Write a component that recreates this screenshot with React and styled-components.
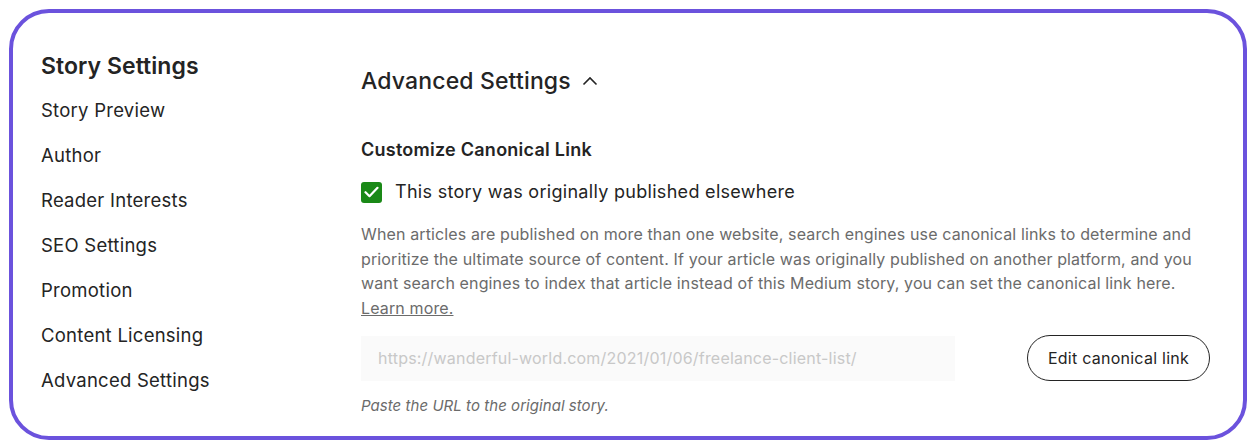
import React from "react";
import styled, { createGlobalStyle } from "styled-components";

const Global = createGlobalStyle`
  html, body { margin: 0; padding: 0; background: #ffffff; }
  body { font-family: Inter, "Noto Sans", sans-serif; color: #242424; }
`;

const Frame = styled.div`
  box-sizing: border-box;
  margin: 9px;
  width: 1238px;
  height: 431px;
  border: 4px solid #6b52dd;
  border-radius: 40px;
  background: #fff;
  display: flex;
  padding: 37px 0 0 28px;
  overflow: hidden;
`;

const Sidebar = styled.nav`
  width: 320px;
  flex: none;
  display: flex;
  flex-direction: column;
`;

const SideTitle = styled.h2`
  margin: 0 0 16px;
  font-size: 23px;
  line-height: 32px;
  font-weight: 600;
  color: #242424;
  letter-spacing: 0.05px;
`;

const SideItem = styled.a`
  font-size: 18.5px;
  line-height: 24px;
  height: 45px;
  color: #242424;
  text-decoration: none;
  letter-spacing: 0.25px;
`;

const Main = styled.section`
  width: 849px;
  display: flex;
  flex-direction: column;
  padding-top: 15px;
`;

const SectionTitle = styled.h2`
  margin: 0;
  display: flex;
  align-items: center;
  gap: 11px;
  font-size: 23px;
  line-height: 32px;
  font-weight: 500;
  color: #242424;
  letter-spacing: 0.15px;
`;

const SubTitle = styled.h3`
  margin: 41px 0 0;
  font-size: 18px;
  line-height: 24px;
  font-weight: 600;
  color: #242424;
  letter-spacing: 0.25px;
`;

const CheckRow = styled.label`
  margin-top: 18px;
  display: flex;
  align-items: center;
  gap: 13px;
  font-size: 18px;
  line-height: 24px;
  color: #242424;
  letter-spacing: 0.3px;
`;

const Box = styled.span`
  width: 21px;
  height: 21px;
  border-radius: 3px;
  background: #1a8917;
  display: inline-flex;
  align-items: center;
  justify-content: center;
  flex: none;
`;

const Para = styled.p`
  margin: 18px 0 0;
  font-size: 16px;
  line-height: 24.6px;
  color: #6b6b6b;
  letter-spacing: 0.13px;
`;

const Learn = styled.a`
  color: #6b6b6b;
  text-decoration: underline;
`;

const InputRow = styled.div`
  margin-top: 15px;
  display: flex;
  align-items: center;
  justify-content: space-between;
`;

const UrlInput = styled.input`
  box-sizing: border-box;
  width: 594px;
  height: 45px;
  border: none;
  outline: none;
  background: #fafafa;
  padding: 0 17px;
  font-family: inherit;
  font-size: 16px;
  letter-spacing: 0.2px;
  color: #242424;
  &::placeholder { color: #c8c8c8; }
`;

const PillButton = styled.button`
  box-sizing: border-box;
  height: 46px;
  padding: 0 20px;
  border: 1px solid #242424;
  border-radius: 23px;
  background: #fff;
  font-family: inherit;
  font-size: 16px;
  letter-spacing: 0.25px;
  color: #242424;
  cursor: pointer;
`;

const Hint = styled.p`
  margin: 15px 0 0;
  font-size: 15px;
  line-height: 20px;
  font-style: italic;
  color: #6b6b6b;
  letter-spacing: 0.05px;
`;

const items = [
  "Story Preview",
  "Author",
  "Reader Interests",
  "SEO Settings",
  "Promotion",
  "Content Licensing",
  "Advanced Settings",
];

export default function App() {
  return (
    <>
      <Global />
      <Frame>
        <Sidebar>
          <SideTitle>Story Settings</SideTitle>
          {items.map((t) => (
            <SideItem key={t} href="#">{t}</SideItem>
          ))}
        </Sidebar>
        <Main>
          <SectionTitle>
            Advanced Settings
            <svg width="16" height="10" viewBox="0 0 16 10" fill="none">
              <path d="M1.5 8.5L8 2l6.5 6.5" stroke="#242424" strokeWidth="1.6" />
            </svg>
          </SectionTitle>
          <SubTitle>Customize Canonical Link</SubTitle>
          <CheckRow>
            <Box>
              <svg width="15" height="12" viewBox="0 0 15 12" fill="none">
                <path d="M1.5 6.2l4 4L13.5 1.8" stroke="#fff" strokeWidth="2.2" strokeLinecap="round" strokeLinejoin="round" />
              </svg>
            </Box>
            This story was originally published elsewhere
          </CheckRow>
          <Para>
            When articles are published on more than one website, search engines use canonical links to determine and
            prioritize the ultimate source of content. If your article was originally published on another platform, and you
            want search engines to index that article instead of this Medium story, you can set the canonical link here.{" "}
            <br />
            <Learn href="#">Learn more.</Learn>
          </Para>
          <InputRow>
            <UrlInput placeholder="https://wanderful-world.com/2021/01/06/freelance-client-list/" />
            <PillButton>Edit canonical link</PillButton>
          </InputRow>
          <Hint>Paste the URL to the original story.</Hint>
        </Main>
      </Frame>
    </>
  );
}
